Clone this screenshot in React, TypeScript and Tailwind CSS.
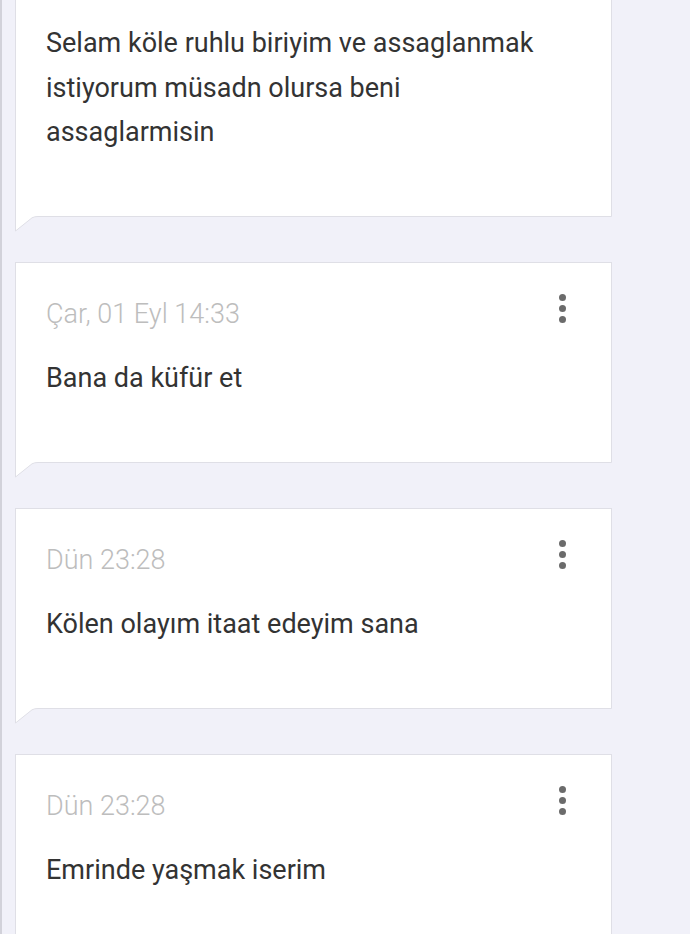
import React from 'react'

type Msg = { id: number; time?: string; lines: string[]; first?: boolean }

const messages: Msg[] = [
  {
    id: 1,
    first: true,
    lines: ['Selam köle ruhlu biriyim ve assaglanmak', 'istiyorum müsadn olursa beni', 'assaglarmisin'],
  },
  { id: 2, time: 'Çar, 01 Eyl 14:33', lines: ['Bana da küfür et'] },
  { id: 3, time: 'Dün 23:28', lines: ['Kölen olayım itaat edeyim sana'] },
  { id: 4, time: 'Dün 23:28', lines: ['Emrinde yaşmak iserim'] },
]

function Dots() {
  return (
    <div className="mt-[-4px] flex flex-col gap-[4px]">
      <span className="block h-[7px] w-[7px] rounded-full bg-[#6b6b6b]" />
      <span className="block h-[7px] w-[7px] rounded-full bg-[#6b6b6b]" />
      <span className="block h-[7px] w-[7px] rounded-full bg-[#6b6b6b]" />
    </div>
  )
}

function Tail() {
  return (
    <svg width="597" height="16" viewBox="0 0 597 16" className="block">
      <path d="M0 0 H23 Q19.5 0.5 17 1.8 L0.5 15 Z" fill="#ffffff" />
      <path
        d="M0.5 0 V15 L17 1.8 Q19.5 0.5 23 0.5 H596.5 V0"
        fill="none"
        stroke="#dfdfe6"
        strokeWidth="1"
      />
    </svg>
  )
}

function Card({ msg }: { msg: Msg }) {
  return (
    <div className={msg.first ? '' : 'mt-[30px]'}>
      <div
        className={
          'flex flex-col border-x border-[#dfdfe6] bg-white pl-[30px] pr-[45px] ' +
          (msg.first ? 'h-[216px] pt-[21px]' : 'h-[200px] border-t pt-[35px]')
        }
      >
        {msg.time && (
          <div className="flex items-start justify-between">
            <span className="text-[27px] font-light leading-[32px] text-[#bdbdbd]">{msg.time}</span>
            <Dots />
          </div>
        )}
        <div className={msg.time ? 'mt-[26px]' : ''}>
          {msg.lines.map((l, i) => (
            <p key={i} className="text-[27px] leading-[44.5px] text-[#333333]">
              {l}
            </p>
          ))}
        </div>
      </div>
      <Tail />
    </div>
  )
}

export default function App() {
  return (
    <div
      className="h-[934px] overflow-hidden border-l-[2px] border-[#d2d2da] bg-[#f1f1f9] pl-[13px]"
      style={{ fontFamily: 'Roboto, "Noto Sans", sans-serif' }}
    >
      <div className="w-[597px]">
        {messages.map((m) => (
          <Card key={m.id} msg={m} />
        ))}
      </div>
    </div>
  )
}
